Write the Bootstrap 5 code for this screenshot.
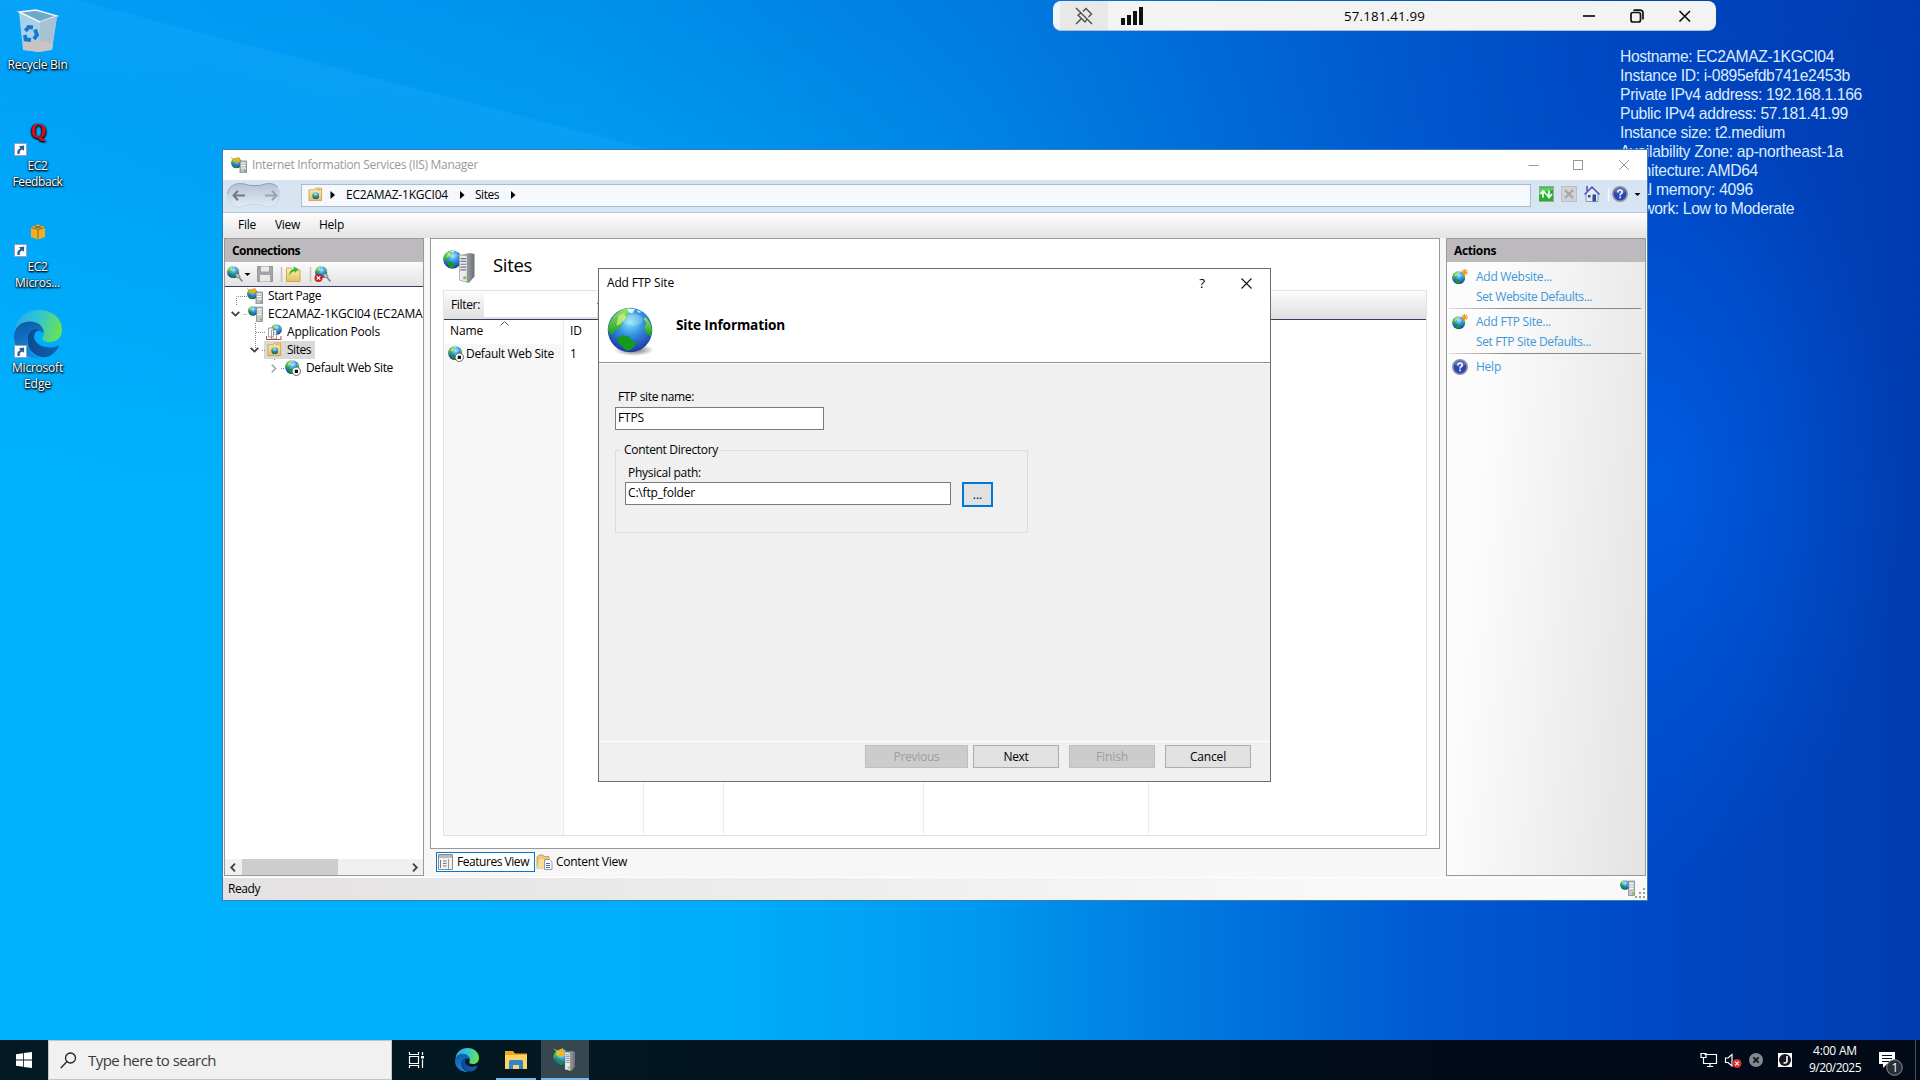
<!DOCTYPE html>
<html lang="en">
<head>
<meta charset="utf-8">
<title>IIS Manager - Add FTP Site</title>
<link href="https://cdn.jsdelivr.net/npm/bootstrap@5.3.0/dist/css/bootstrap.min.css" rel="stylesheet">
<style>
html,body{width:1920px;height:1080px;overflow:hidden;margin:0}
body{font-family:"Open Sans","Noto Sans",sans-serif;font-size:12px;line-height:18px;color:#000;background:#0078d7}
.desktop{width:1920px;height:1080px}
.wallpaper{left:0;top:0;width:1920px;height:1080px}
svg{display:block;flex:none}
.t{white-space:nowrap;display:inline-block;flex:none}
.i16{width:16px;height:16px}
/* desktop shortcuts */
.shortcuts{left:0;top:0;width:75px}
.shortcut{height:101px;color:#fff;text-shadow:0 1px 2px #000,1px 1px 2px #000,0 0 2px rgba(0,0,0,.6);line-height:15.5px}
.shortcut .pic{width:48px;height:48px;margin-top:7px;margin-bottom:2px}
/* host info */
.hostinfo{left:1620px;top:46.5px;font-family:"Liberation Sans",Arial,sans-serif;font-size:15.7px;line-height:19px;color:#dcecff}
/* remote bar */
.remotebar{left:1053px;top:1px;width:663px;height:30px;background:#f3f3f3;border-radius:8px;border-bottom:1px solid #a9bfd8;font-size:13.3px;padding-left:7px}
.pinbox{width:48px;height:29px;background:#e8e8e8}
.signal{margin-left:13px}
.remoteip{margin-left:200px}
.remotebtns{margin-left:158px}
/* main window */
.win{left:222px;top:149px;width:1426px;height:752px;border:1px solid #3a7cae;background:#f7f7f7}
.win-title{height:30px;background:#fff;color:#999;padding-left:8px}
.navstrip{height:33px;background:#d7e4f2;border-bottom:1px solid #b9c9da;padding-left:3px}
.address{width:1230px;height:23px;background:#f5f9fd;border:1px solid #adbccb;margin-left:18px;padding-left:6px;margin-top:-2px}
.menustrip{height:25px;background:linear-gradient(#fefefe,#e3e3e3);padding:0 0 2px 15px;gap:19px}
.mainarea{height:639px;padding-left:1px;gap:6px}
.pane{border:1px solid #999;background:#fff}
.conn,.acts{width:200px;height:638px}
.pane-head{height:23px;background:#bdbabd;padding-left:7px;font-weight:700}
.conn-tools{height:25px;background:linear-gradient(#fbfbfb,#e3e2e4);border-bottom:1px solid #3c3a5c}
.tree-row{height:18px;width:198px;overflow:hidden}
.picked{background:#d9d9d9;height:18px;width:51px;padding-left:3px;margin-left:5px}
.treelines{left:0;top:0}
.hscroll{height:16px;background:#f0f0f0}
.hthumb{width:96px;height:16px;background:#cdcdcd}
.center{width:1010px}
.viewpane{height:611px;padding:0 12px}
.viewhead{height:51px}
.viewname{font-size:18.5px;margin-left:17px}
.gridbox{height:546px;border:1px solid #e2e2e4}
.filterbar{height:29px;background:linear-gradient(#fcfcfc,#dfdee0);border-bottom:1px solid #3c3a5c;padding-left:7px}
.filterinput{width:113px;height:23px;background:#fff;margin-left:4px}
.gcol{border-right:1px solid #e3eefb;height:515px;width:80px}
.gcol-sorted{background:linear-gradient(#fff 24px,#f7f7f7 24px);width:120px}
.gcap{height:24px;padding:2px 0 0 6px}
.sortmark{left:56px;top:1px}
.viewtab{height:20px;border:1px solid transparent}
.viewtab-on{border-color:#0078d7;background:#fff;width:99px}
.acts{background:linear-gradient(95deg,#fcfcfc 20%,#e3e3e3)}
.acts a{color:#3d97d9;text-decoration:none}
.act-row{height:20px;padding-left:5px}
.act-row .i16{margin-right:8px}
.act-plain{padding-left:29px}
.act-sep{height:1px;margin:1px 4px 3px 2px;background:linear-gradient(90deg,#ddd,#888 30%)}
.statusbar{height:23px;border-top:1px solid #fff;background:linear-gradient(90deg,#e3e1e2,#f9f9f9 80%)}
/* dialog */
.dlg{left:598px;top:268px;width:673px;height:514px;border:1px solid #6d6d6d;background:#f0f0f0}
.dlg-title{height:30px;background:#fff;padding:0 18px 2px 8px}
.dlg-head{height:65px;background:#fff;border-bottom:1px solid #fff;box-shadow:inset 0 -1px #8f8f8f;padding-left:8px}
.dlg-caption{font-size:13.6px;margin:17px 0 0 19px}
.dlg-body{height:377px;padding:24px 16px 0}
.field{height:23px;background:#fff;border:1px solid #7a7a7a;padding:0 2px;line-height:19px}
.groupbox{width:413px;height:83px;border:1px solid #dcdcdc;margin-top:20px;padding:13px 9px 0}
.group-cap{left:5px;top:-10px;background:#f0f0f0;padding:0 3px}
.dlg-foot{height:40px;border-top:1px solid #fff;padding:3px 19px 0 0}
.wbtn{height:23px;width:86px;background:#e1e1e1;border:1px solid #adadad;margin-left:10px}
.wbtn-off{background:#ccc;border-color:#bfbfbf;color:#9d9d9d}
.browse{width:31px;height:25px;border:2px solid #0078d7;background:#e1e1e1;margin-left:11px}
/* taskbar */
.taskbar{left:0;top:1040px;width:1920px;height:40px;background:linear-gradient(90deg,#021923,#021722 30%,#020b1a 75%,#020a18);color:#fff}
.search{width:344px;height:40px;background:#f1f1f1;border:1px solid #c4c4c4;color:#3b3b3b;font-size:15px}
.tb{width:48px;height:40px}
.tb-on{background:#36474f}
.clock{line-height:17.5px;width:60px}
</style>
<script src="https://cdn.jsdelivr.net/npm/bootstrap@5.3.0/dist/js/bootstrap.bundle.min.js"></script>
</head>
<body>
<svg width="0" height="0" class="position-absolute">
<defs>
<radialGradient id="gb" cx=".5" cy=".32" r=".68"><stop offset="0" stop-color="#86e4ff"/><stop offset=".45" stop-color="#3390e0"/><stop offset="1" stop-color="#1c34a4"/></radialGradient>
<linearGradient id="gg" x2="0" y2="1"><stop offset="0" stop-color="#9be65a"/><stop offset="1" stop-color="#169c22"/></linearGradient>
<linearGradient id="gs"><stop offset="0" stop-color="#c8ccd0"/><stop offset="1" stop-color="#6b6f73"/></linearGradient>
<linearGradient id="gf" x2="0" y2="1"><stop offset="0" stop-color="#fdf0b8"/><stop offset="1" stop-color="#e5bf5c"/></linearGradient>
<linearGradient id="e1" x1="0" y1=".3" x2="1" y2=".5"><stop offset="0" stop-color="#2fa8e8"/><stop offset=".45" stop-color="#2fc4d8"/><stop offset="1" stop-color="#6be34f"/></linearGradient>
<linearGradient id="e2" x1="0" y1="0" x2=".3" y2="1"><stop offset="0" stop-color="#0c59a4"/><stop offset="1" stop-color="#1a86dd"/></linearGradient>
<linearGradient id="e3"><stop offset="0" stop-color="#0c4a94"/><stop offset="1" stop-color="#1460ae"/></linearGradient>
<symbol id="globe" viewBox="0 0 32 32">
 <circle cx="16" cy="16" r="15.5" fill="url(#gb)"/>
 <path d="M3 9Q7 2 14 1L17 3L13.500 5L14.500 8L11 10L10 13L8 16L5.500 15.500L3.500 20L1 17Q0 13 3 9Z" fill="url(#gg)"/>
 <path d="M8 6L12 4L13 8L9 12L6.500 13Z" fill="#d9efa0" opacity=".7"/>
 <path d="M7.500 21L11 19.500L15 20.500L17 23L20.500 24.500L18.500 28Q16 31 13 30L10 27L7.500 24Z" fill="#159a20"/>
 <path d="M26.500 7Q31 11 31.300 16L30.500 20L27.500 19L26 14.500L27.500 11L25.500 8.500Z" fill="url(#gg)"/>
 <path d="M14 1L19.500 1.400L17.500 4.500L15 3.500ZM20.500 2L24 3.500L22 4Z" fill="#e6f4f0"/>
 <ellipse cx="18" cy="9" rx="7" ry="4" fill="#fff" opacity=".22"/>
</symbol>
<symbol id="tower" viewBox="0 0 16 32">
 <path d="M0 2L11 0L16 1V25L10 32L0 29Z" fill="url(#gs)"/>
 <path d="M0 2L8 3V31L0 29Z" fill="#eceef0" stroke="#8d9195" stroke-width=".6"/>
 <path d="M1 6H7M1 9H7M1 12H7M1 15H7M1 18H7" stroke="#6c7480" stroke-width="1.2"/>
 <rect x="4" y="25" width="3" height="3" fill="#5fd427"/>
</symbol>
<symbol id="iis" viewBox="0 0 16 16">
 <use href="#globe" x="0" y=".5" width="11" height="11"/>
 <path d="M0 .5L3 2.500L8 0L9.500 5.500L5 5L6.500 3.500L3.500 4.500Z" fill="#f4b41c" stroke="#c98a10" stroke-width=".4"/>
 <path d="M9 4H15.500V16H9Z" fill="#b9bfc2" stroke="#6d7478" stroke-width=".7"/><path d="M10 6H14.500M10 8.500H14.500M10 11H14.500" stroke="#fff"/><path d="M13 13h2v2h-2z" fill="#6ecb2c"/>
</symbol>
<symbol id="srv" viewBox="0 0 16 16">
 <use href="#globe" x="0" y="0" width="10" height="10"/>
 <path d="M8.500 1H14.500V15.500H8.500Z" fill="#c3c8cb" stroke="#757c80" stroke-width=".7"/><path d="M9.500 3.500H13.500M9.500 6H13.500M9.500 8.500H13.500" stroke="#fff"/><path d="M12 12.500h2v2h-2z" fill="#6ecb2c"/>
</symbol>
<symbol id="folderg" viewBox="0 0 16 16">
 <path d="M1 3H7L8 1.200H14.500V14.500H1Z" fill="url(#gf)" stroke="#c39a3a" stroke-width=".8"/><path d="M9 3h4.500" stroke="#d79b2c"/><use href="#globe" x="4.500" y="5.500" width="7.500" height="7.500"/>
</symbol>
<symbol id="stopglobe" viewBox="0 0 16 16">
 <use href="#globe" width="14.500" height="14.500"/><circle cx="11.300" cy="11.300" r="4.200" fill="#fff" stroke="#555" stroke-width=".9"/><path d="M9.700 9.700h3.300v3.300h-3.300z" fill="#111"/>
</symbol>
<symbol id="star" viewBox="0 0 16 16">
 <use href="#globe" y="2" width="13.500" height="13.500"/><path d="M12.500 0V6.500M9.200 3.200H16M10.200 .9L15 5.600M15 .9L10.200 5.600" stroke="#f39a14" stroke-width="1.100"/>
</symbol>
<symbol id="help" viewBox="0 0 16 16">
 <circle cx="8" cy="8" r="7.200" fill="#2a48b4" stroke="#8f959f" stroke-width="1.600"/><ellipse cx="8" cy="5" rx="5" ry="3" fill="#fff" opacity=".22"/><path d="M5.800 6.200Q5.900 4.100 8 4.100T10.200 6.100Q10.200 7.200 9 7.900T8.100 9.600" fill="none" stroke="#fff" stroke-width="1.500"/><path d="M7.300 10.600h1.600v1.600h-1.600z" fill="#fff"/>
</symbol>
<symbol id="plug" viewBox="0 0 16 16">
 <use href="#globe" width="12.500" height="12.500"/><path d="M8 8L11 7.500L13 10L12.500 12L9.500 11.500Z" fill="#b8c0c4" stroke="#667" stroke-width=".7"/><path d="M12.500 12L15.500 15.500" stroke="#7d8a92" stroke-width="1.600"/>
</symbol>
<symbol id="edge" viewBox="0 0 48 48">
 <path d="M1 22C2 8 12 0 25 0C39 0 48 9 48 20C48 28 42 32 35.500 32C30 32 27.500 30 28.500 28C30.500 25.500 30 22 27.500 19.500C22 13 7 12 1 22Z" fill="url(#e1)"/>
 <path d="M0 25C2 14 10 11 17 11.500C24 12 29.500 16 30 23C22 17 13 22 13 32C13 39 18 45 26 48C11 48.500 -1 38 0 25Z" fill="url(#e2)"/>
 <path d="M30 23C25 17 19 19 16 22C12 27 13 35 17 41C23 48 33 49.500 40 43C43 40 45 37 45 36C45 35 44 35.500 43 36C35 40 21 36 20 27C20 24 22 20 26 20Q29 20 30 23Z" fill="url(#e3)"/>
</symbol>
<symbol id="lnk" viewBox="0 0 13 13"><path d="M.5 .5h12v12H.5z" fill="#fff" stroke="#9aa3ab"/><path d="M3.500 11Q2.500 6.500 6.500 5.200L5 3.200L10.200 2.600L10 7.800L8.400 6.600Q5.200 7.500 5.800 11Z" fill="#2a5c9e"/></symbol>
</defs>
</svg>

<main class="desktop position-relative overflow-hidden">
 <svg class="wallpaper position-absolute" viewBox="0 0 1920 1080" preserveAspectRatio="none">
  <defs>
   <linearGradient id="w1" gradientUnits="userSpaceOnUse" x1="0" y1="0" x2="1920" y2="0"><stop offset="0" stop-color="#009ff8"/><stop offset=".3" stop-color="#0092ed"/><stop offset=".52" stop-color="#007ae0"/><stop offset=".68" stop-color="#0060d3"/><stop offset=".83" stop-color="#0048c4"/><stop offset="1" stop-color="#003cb2"/></linearGradient>
   <linearGradient id="w2" gradientUnits="userSpaceOnUse" x1="0" y1="0" x2="1920" y2="0"><stop offset="0" stop-color="#00b2fc"/><stop offset=".38" stop-color="#00adfa"/><stop offset=".5" stop-color="#009bf1"/><stop offset=".62" stop-color="#0079e0"/><stop offset=".74" stop-color="#005ad2"/><stop offset=".86" stop-color="#0048c6"/><stop offset="1" stop-color="#003db0"/></linearGradient>
   <linearGradient id="wm" x2="0" y2="1"><stop offset="0" stop-color="#000"/><stop offset=".45" stop-color="#fff"/></linearGradient>
   <linearGradient id="wb" gradientUnits="userSpaceOnUse" x1="340" y1="70" x2="315" y2="165"><stop offset="0" stop-color="#28b6ff" stop-opacity=".2"/><stop offset="1" stop-color="#28b6ff" stop-opacity="0"/></linearGradient>
   <radialGradient id="wr" gradientUnits="userSpaceOnUse" cx="0" cy="0" r="1" gradientTransform="translate(1660 480) scale(240 400)"><stop offset="0" stop-color="#0064ea" stop-opacity=".7"/><stop offset="1" stop-color="#0060e6" stop-opacity="0"/></radialGradient>
   <mask id="mk"><rect width="1920" height="1080" fill="url(#wm)"/></mask>
  </defs>
  <rect width="1920" height="1080" fill="url(#w1)"/>
  <rect width="1920" height="1080" fill="url(#w2)" mask="url(#mk)"/>
  <rect x="1400" y="60" width="520" height="840" fill="url(#wr)"/>
  <path d="M75 0L660 152L660 230L0 230V0Z" fill="url(#wb)"/>
 </svg>

 <section class="shortcuts position-absolute d-flex flex-column">
  <div class="shortcut d-flex flex-column align-items-center">
   <svg class="pic" viewBox="0 0 48 48"><path d="M5 5L22 3L43 9L38 43L25 45L9 43Z" fill="#c5d9e6" opacity=".85"/><path d="M5 5L22 3L43 9L26 15Z" fill="#6fa9c9" stroke="#f2f8fb" stroke-width="1.400"/><path d="M26 15L43 9L38 42L25 45Z" fill="#a8c2d2"/><path d="M9 36L22 33L39 36L38 42L25 45L10 43Z" fill="#c9c4c2"/><g fill="none" stroke="#1677cf" stroke-width="3.800"><path d="M11.500 24L14.500 20L19 20.500"/><path d="M21 22.500L23 28L20 32"/><path d="M17 33L11.500 32.500L11 28"/></g></svg>
   <span class="t" data-w="60">Recycle Bin</span>
  </div>
  <div class="shortcut d-flex flex-column align-items-center">
   <svg class="pic" viewBox="0 0 48 48"><text x="16.500" y="30" font-family="Liberation Serif,serif" font-size="20" font-weight="700" fill="#e00a1e">Q</text><use href="#lnk" y="35" width="13" height="13"/></svg>
   <span class="t" data-w="20">EC2</span><span class="t" data-w="50">Feedback</span>
  </div>
  <div class="shortcut d-flex flex-column align-items-center">
   <svg class="pic" viewBox="0 0 48 48"><path d="M17 18L24 15.500L31 18V28L24 30.500L17 28Z" fill="#f5ae22"/><path d="M17 18.500L24 20.500L31 18.500M24 20.500V30M20.500 16.800L27 19M27.500 16.800L21 19" stroke="#5f6a3a" stroke-width=".9" fill="none"/><use href="#lnk" y="35" width="13" height="13"/></svg>
   <span class="t" data-w="20">EC2</span><span class="t" data-w="45">Micros...</span>
  </div>
  <div class="shortcut d-flex flex-column align-items-center">
   <svg class="pic" viewBox="0 0 48 48"><use href="#edge" width="48" height="48"/><use href="#lnk" y="35" width="13" height="13"/></svg>
   <span class="t" data-w="51">Microsoft</span><span class="t" data-w="27">Edge</span>
  </div>
 </section>

 <section class="hostinfo position-absolute d-flex flex-column align-items-start">
  <span class="t" data-w="214">Hostname: EC2AMAZ-1KGCI04</span>
  <span class="t" data-w="230">Instance ID: i-0895efdb741e2453b</span>
  <span class="t" data-w="242">Private IPv4 address: 192.168.1.166</span>
  <span class="t" data-w="228">Public IPv4 address: 57.181.41.99</span>
  <span class="t" data-w="165">Instance size: t2.medium</span>
  <span class="t" data-w="223">Availability Zone: ap-northeast-1a</span>
  <span class="t" data-w="138">Architecture: AMD64</span>
  <span class="t" data-w="133">Total memory: 4096</span>
  <span class="t" data-w="174">Network: Low to Moderate</span>
 </section>

 <header class="remotebar position-absolute d-flex align-items-center">
  <div class="pinbox d-flex align-items-center justify-content-center"><svg width="18" height="18" viewBox="0 0 18 18" fill="none" stroke="#4a4a4a" stroke-width="1.300"><path d="M1 1L17 17M6 6L3 8L10 15L12 12M8 4.500L11 1.500L16.500 7L13.500 10M6.500 11.500L1 17"/></svg></div>
  <svg class="signal" width="23" height="18" viewBox="0 0 23 18" fill="#111"><path d="M0 11h4v7H0zM6 8h4v10H6zM12 4h4v14h-4zM18 0h4v18h-4z"/></svg>
  <span class="t remoteip" data-w="81">57.181.41.99</span>
  <svg class="remotebtns" width="110" height="16" viewBox="0 0 110 16" fill="none" stroke="#111" stroke-width="1.700"><path d="M0 8H12"/><rect x="48" y="4.500" width="9.500" height="9.500" rx="2"/><path d="M50.500 2.200H57Q60 2.200 60 5V11.500"/><path d="M96.500 3L107 13.500M107 3L96.500 13.500"/></svg>
 </header>

 <section class="win position-absolute d-flex flex-column">
  <div class="win-title d-flex align-items-center">
   <svg class="i16"><use href="#iis" width="16" height="16"/></svg>
   <span class="t me-auto" style="margin-left:5px" data-w="226">Internet Information Services (IIS) Manager</span>
   <svg width="120" height="12" viewBox="0 0 120 12" fill="none" stroke="#999"><path d="M1.500 6.500H11.500"/><rect x="46.500" y="1.500" width="9" height="9"/><path d="M92 1L102 11M102 1L92 11"/></svg>
  </div>
  <nav class="navstrip d-flex align-items-center">
   <svg width="57" height="28" viewBox="0 0 57 28"><defs><linearGradient id="nb" x2="0" y2="1"><stop offset="0" stop-color="#b4c2d2"/><stop offset=".5" stop-color="#cbd8e6"/><stop offset="1" stop-color="#e2ecf6"/></linearGradient></defs><path d="M13 1.500Q19 1.500 24 3.500H34Q39 1.500 44 1.500Q54 3 54 13Q53 24 43 25Q38 24 34 22.500H23Q18 25 12 25Q2 23 1.500 13Q2 3 13 1.500Z" fill="url(#nb)" stroke="#cbd8e6"/><path d="M1.500 12Q3 2.500 13 1.500Q19 1.500 24 3.500H34Q39 1.500 44 1.500Q49 2 52 5" fill="none" stroke="#8f9fb2"/><path d="M19 13.500H7.500M12 8.800L7.500 13.500L12 18.200" stroke="#75797f" stroke-width="2" fill="none"/><path d="M39 13.500H50.500M46 8.800L50.500 13.500L46 18.200" stroke="#9ca5ae" stroke-width="2" fill="none"/></svg>
   <div class="address d-flex align-items-center">
    <svg class="i16"><use href="#folderg" width="15" height="15"/></svg>
    <svg width="22" height="8" viewBox="0 0 22 8"><path d="M6.500 0v8l4.500-4z"/></svg>
    <span class="t" data-w="102">EC2AMAZ-1KGCI04</span>
    <svg width="27" height="8" viewBox="0 0 27 8"><path d="M12 0v8l4.500-4z"/></svg>
    <span class="t" data-w="24">Sites</span>
    <svg width="20" height="8" viewBox="0 0 20 8"><path d="M12 0v8l4.500-4z"/></svg>
   </div>
   <svg width="107" height="20" viewBox="0 0 107 20" class="ms-2 mb-1">
    <rect x="-.5" y="2.500" width="15" height="15" fill="#22b22e" stroke="#9aa89e"/><path d="M1 11Q5 7 14 6V3.500H0V11Z" fill="#8be88a" opacity=".55"/><path d="M4 13.500V8Q4 7 5.500 7M1.500 10L4 7L7 10M10 6.500V12M7.500 10L10 13.500L13 10" stroke="#fff" stroke-width="1.700" fill="none"/>
    <rect x="22.500" y="2.500" width="15" height="15" fill="#d0d2d5" stroke="#bbbec2"/><path d="M26 6L34 14M34 6L26 14" stroke="#a2a5aa" stroke-width="2"/>
    <path d="M47 9V17.500H59V9L53 3.500Z" fill="#e4e9f2" stroke="#7683a8" stroke-width=".8"/><path d="M45.500 10.500L53 3L60.500 10.500M48 2V7" stroke="#4a50c0" stroke-width="1.500" fill="none"/><path d="M53.500 10.500h3.500v7h-3.500z" fill="#274f94"/><path d="M49 11h2.500v2.500H49z" fill="#39507c"/>
    <path d="M69.500 4V17" stroke="#f7f9fc" stroke-width="1.500"/><use href="#help" x="73" y="2" width="16" height="16"/><path d="M95.500 9h6l-3 3z"/>
   </svg>
  </nav>
  <div class="menustrip d-flex align-items-center"><span class="t" data-w="18">File</span><span class="t" data-w="25">View</span><span class="t" data-w="25">Help</span></div>

  <div class="mainarea d-flex">
   <aside class="pane conn d-flex flex-column">
    <div class="pane-head d-flex align-items-center"><span class="t" data-w="68">Connections</span></div>
    <div class="conn-tools">
     <svg width="120" height="24" viewBox="0 0 120 24"><use href="#plug" x="2" y="4" width="16" height="16"/><path d="M19.500 11h6l-3 3z"/><path d="M32.500 4.500h15v15h-15z" fill="#a3a5a8" stroke="#97999c"/><path d="M36 4.500h8v5h-8zM35 13h10v6.500H35z" fill="#e9e9ea"/><path d="M56.500 5V20M85.500 5V20" stroke="#c7c3ae" stroke-width="1.500"/><path d="M61.500 6H66L68 8H75V19.500H61.500Z" fill="url(#gf)" stroke="#c39a3a" stroke-width=".8"/><path d="M64 14Q64 8 69 7L68 4.500L73.500 7L70 11L69.500 9Q66 10 64 14Z" fill="#3fb52c"/><use href="#plug" x="90" y="4" width="16" height="16"/><circle cx="93.500" cy="16" r="4" fill="#cf2222"/><path d="M91.800 14.300L95.200 17.700M95.200 14.300L91.800 17.700" stroke="#fff" stroke-width="1.200"/></svg>
    </div>
    <div class="flex-grow-1 position-relative">
     <svg class="position-absolute treelines" width="60" height="92" viewBox="0 0 60 92" fill="none" stroke="#888" stroke-dasharray="1 1"><path d="M11.500 18V9.500H22M18.500 27.500H22M30.500 36V63M31 45.500H41M37 63.500H40M49.500 72V74M56 81.500H60"/></svg>
     <div class="tree-row d-flex align-items-center" style="padding-left:22px"><svg class="i16"><use href="#iis" width="16" height="16"/></svg><span class="t" style="margin-left:5px" data-w="53">Start Page</span></div>
     <div class="tree-row d-flex align-items-center" style="padding-left:6px"><svg width="9" height="6" fill="none" stroke="#404040" stroke-width="1.800"><path d="M.7 .8L4.500 4.600L8.300 .8"/></svg><svg class="i16" style="margin-left:8px"><use href="#srv" width="16" height="16"/></svg><span class="t" style="margin-left:4px" data-w="154.500">EC2AMAZ-1KGCI04 (EC2AMA</span></div>
     <div class="tree-row d-flex align-items-center" style="padding-left:41px"><svg class="i16" viewBox="0 0 16 16"><use href="#globe" x="5" y="0" width="11" height="11"/><path d="M2.500 4h5v9h-5zM5.500 6h5v9h-5z" fill="#fff" stroke="#778" stroke-width=".7"/><path d="M7 8.500h2.500M7 10.500h2.500" stroke="#889" stroke-width=".7"/><path d="M.5 12v3.500H15V12" fill="none" stroke="#c2403a"/></svg><span class="t" style="margin-left:5px" data-w="93">Application Pools</span></div>
     <div class="tree-row d-flex align-items-center" style="padding-left:25px"><svg width="9" height="6" fill="none" stroke="#404040" stroke-width="1.800"><path d="M.7 .8L4.500 4.600L8.300 .8"/></svg><div class="picked d-flex align-items-center"><svg class="i16"><use href="#folderg" width="15" height="15"/></svg><span class="t" style="margin-left:4px" data-w="24">Sites</span></div></div>
     <div class="tree-row d-flex align-items-center" style="padding-left:46px"><svg width="6" height="9" fill="none" stroke="#a0a0a0" stroke-width="1.500"><path d="M.8 .7L4.600 4.500L.8 8.300"/></svg><svg class="i16" style="margin-left:8px"><use href="#stopglobe" width="16" height="16"/></svg><span class="t" style="margin-left:5px" data-w="87">Default Web Site</span></div>
    </div>
    <div class="hscroll d-flex align-items-center"><svg width="17" height="9" viewBox="0 0 17 9" fill="none" stroke="#404040" stroke-width="1.800"><path d="M10 .7L6.200 4.500L10 8.300"/></svg><div class="hthumb me-auto"></div><svg width="14" height="9" viewBox="0 0 14 9" fill="none" stroke="#404040" stroke-width="1.800"><path d="M4 .7L7.800 4.500L4 8.300"/></svg></div>
   </aside>

   <section class="center d-flex flex-column">
    <div class="pane viewpane">
     <div class="viewhead d-flex align-items-center">
      <svg class="mt-1" width="33" height="34" viewBox="0 0 33 34"><use href="#globe" width="19" height="19"/><use href="#tower" x="15.500" y="3" width="17" height="30"/></svg>
      <span class="t viewname" data-w="39">Sites</span>
     </div>
     <div class="gridbox">
      <div class="filterbar d-flex align-items-center"><span class="t" data-w="29">Filter:</span><div class="filterinput"></div><svg width="6" height="4"><path d="M0 0h6l-3 3z"/></svg></div>
      <div class="d-flex">
       <div class="gcol gcol-sorted position-relative">
        <svg class="position-absolute sortmark" width="9" height="5" fill="none" stroke="#555"><path d="M.5 4.500L4.500 .5L8.500 4.500"/></svg>
        <div class="gcap"><span class="t" data-w="33">Name</span></div>
        <div class="d-flex align-items-center" style="height:20px;padding-left:4px"><svg class="i16"><use href="#stopglobe" width="16" height="16"/></svg><span class="t" style="margin-left:2px" data-w="88">Default Web Site</span></div>
       </div>
       <div class="gcol"><div class="gcap"><span class="t" data-w="12">ID</span></div><div style="height:20px;padding:1px 0 0 6px"><span class="t">1</span></div></div>
       <div class="gcol"></div><div class="gcol" style="width:200px"></div><div class="gcol" style="width:225px"></div>
      </div>
     </div>
    </div>
    <div class="d-flex" style="padding:3px 0 0 6px">
     <div class="viewtab viewtab-on d-flex align-items-center"><svg width="17" height="16" viewBox="0 0 17 16"><path d="M1.500 .5h14v15h-14z" fill="#f2f2f2" stroke="#8a8a8a"/><path d="M2 1h13v3H2z" fill="#b7bac0"/><path d="M3.500 6v8M6 7h3.500M6 9.500h3.500M6 12h3.500" stroke="#777"/><path d="M11.500 5v10" stroke="#9a9a9a"/></svg><span class="t" style="margin-left:3px" data-w="72">Features View</span></div>
     <div class="viewtab d-flex align-items-center"><svg width="17" height="16" viewBox="0 0 17 16"><path d="M1 3L3 1H7L8 2.500H13V14H1Z" fill="#ecc978" stroke="#c39a3a" stroke-width=".8"/><path d="M1 14L4 5H14L12 14Z" fill="#f8dd97"/><path d="M8.500 5.500h5l2.500 2.500v7.500H8.500z" fill="#fff" stroke="#8c8c94" stroke-width=".9"/><path d="M10 9.500h4M10 11.500h4M10 13.500h4" stroke="#3f6ec6"/></svg><span class="t" style="margin-left:3px" data-w="71">Content View</span></div>
    </div>
   </section>

   <aside class="pane acts">
    <div class="pane-head d-flex align-items-center"><span class="t" data-w="42">Actions</span></div>
    <div class="act-row d-flex align-items-center" style="margin-top:5px"><svg class="i16"><use href="#star" width="16" height="16"/></svg><a class="t" href="#" data-w="76">Add Website...</a></div>
    <div class="act-row act-plain d-flex align-items-center"><a class="t" href="#" data-w="116">Set Website Defaults...</a></div>
    <div class="act-sep"></div>
    <div class="act-row d-flex align-items-center"><svg class="i16"><use href="#star" width="16" height="16"/></svg><a class="t" href="#" data-w="75">Add FTP Site...</a></div>
    <div class="act-row act-plain d-flex align-items-center"><a class="t" href="#" data-w="115">Set FTP Site Defaults...</a></div>
    <div class="act-sep"></div>
    <div class="act-row d-flex align-items-center"><svg class="i16"><use href="#help" width="16" height="16"/></svg><a class="t" href="#" data-w="25">Help</a></div>
   </aside>
  </div>
  <footer class="statusbar d-flex align-items-center"><span class="t me-auto" style="margin-left:5px" data-w="32">Ready</span>
   <svg width="27" height="18" viewBox="0 0 27 18"><use href="#srv" y="0" width="16" height="16"/><path d="M23 8h2v2h-2zM19 12h2v2h-2zM23 12h2v2h-2zM15 16h2v2h-2zM19 16h2v2h-2zM23 16h2v2h-2z" fill="#999"/></svg></footer>
 </section>

 <section class="dlg position-absolute d-flex flex-column" role="dialog">
  <div class="dlg-title d-flex align-items-center"><span class="t me-auto" data-w="67">Add FTP Site</span><span class="t" style="font-size:13.500px">?</span><svg width="11" height="11" style="margin-left:36px" stroke="#111" stroke-width="1.100"><path d="M.5 .5L10.500 10.500M10.500 .5L.5 10.500"/></svg></div>
  <div class="dlg-head d-flex align-items-start">
   <svg width="50" height="52" viewBox="0 0 50 52" style="margin-top:7px"><defs><radialGradient id="sh"><stop offset="0" stop-opacity=".6"/><stop offset="1" stop-opacity="0"/></radialGradient></defs><ellipse cx="27" cy="44" rx="20" ry="6" fill="url(#sh)"/><use href="#globe" y="1" width="46" height="46"/></svg>
   <span class="t fw-bold dlg-caption" data-w="109">Site Information</span>
  </div>
  <div class="dlg-body">
   <div style="padding-left:3px"><label class="t" data-w="76">FTP site name:</label></div>
   <div class="field" style="width:209px;margin-top:1px"><span class="t" data-w="26">FTPS</span></div>
   <div class="groupbox position-relative">
    <span class="group-cap position-absolute"><span class="t" data-w="94">Content Directory</span></span>
    <div style="padding-left:3px"><label class="t" data-w="73">Physical path:</label></div>
    <div class="d-flex align-items-start"><div class="field" style="width:326px"><span class="t" data-w="67">C:\ftp_folder</span></div><div class="browse d-flex align-items-center justify-content-center"><span class="t">...</span></div></div>
   </div>
  </div>
  <div class="dlg-foot d-flex justify-content-end">
   <div class="wbtn wbtn-off d-flex align-items-center justify-content-center" style="width:103px"><span class="t" data-w="46">Previous</span></div>
   <div class="wbtn d-flex align-items-center justify-content-center" style="margin-left:5px"><span class="t" data-w="25">Next</span></div>
   <div class="wbtn wbtn-off d-flex align-items-center justify-content-center"><span class="t" data-w="32">Finish</span></div>
   <div class="wbtn d-flex align-items-center justify-content-center"><span class="t" data-w="36">Cancel</span></div>
  </div>
 </section>

 <footer class="taskbar position-absolute d-flex align-items-center">
  <div class="tb d-flex align-items-center justify-content-center"><svg width="16" height="16" fill="#fff"><path d="M0 2.200L7 1.200V7.600H0zM7.800 1.100L16 0V7.600H7.800zM0 8.400H7V14.800L0 13.800zM7.800 8.400H16V16L7.800 14.900z"/></svg></div>
  <div class="search d-flex align-items-center"><svg width="17" height="17" style="margin-left:11px" viewBox="0 0 17 17" fill="none" stroke="#222" stroke-width="1.300"><circle cx="10.500" cy="6" r="5"/><path d="M7 9.500L.8 16"/></svg><span class="t" style="margin-left:11px" data-w="128">Type here to search</span></div>
  <div class="tb d-flex align-items-center justify-content-center"><svg width="17" height="16" viewBox="0 0 17 16" fill="none" stroke="#fff" stroke-width="1.200"><path d="M1.500 4.500h9v7h-9zM1.500 0V2.500H10.500V0M1.500 16V13.500H10.500V16M14.500 0V3M14.500 7.500V16"/><path d="M13 4h3v2.500h-3z" fill="#fff" stroke="none"/></svg></div>
  <div class="tb d-flex align-items-center justify-content-center" style="margin-left:3px"><svg width="24" height="24"><use href="#edge" width="24" height="24"/></svg></div>
  <div class="tb d-flex flex-column align-items-center" style="padding-top:11px;margin-left:1px"><svg width="22" height="27" viewBox="0 0 22 27"><path d="M0 0H8L10 2.500H22V17H0Z" fill="#f0a81e"/><path d="M0 4H22V18H0Z" fill="#ffd562"/><path d="M4 18V10.500Q4 9 5.500 9H16.500Q18 9 18 10.500V18H14V14H8V18Z" fill="#2f83d0"/></svg><svg width="40" height="2"><path d="M0 0h40v2H0z" fill="#76b9ed"/></svg></div>
  <div class="tb tb-on d-flex flex-column justify-content-between align-items-center" style="padding-top:7px;margin-left:1px"><svg width="24" height="25" viewBox="0 0 24 25"><use href="#globe" y="2" width="17" height="17"/><path d="M0 1L5 4L10 1L12 9L5 10L6 7Z" fill="#f2b71e"/><use href="#tower" x="11" y="4" width="12" height="20"/></svg><svg width="48" height="2"><path d="M0 0h48v2H0z" fill="#76b9ed"/></svg></div>
  <div class="ms-auto d-flex align-items-center">
   <svg width="94" height="18" viewBox="0 0 94 18" fill="none"><path d="M6.500 3.500H18.500V12.500H5.500V8M9 15.500H15M12 12.500V15.500M3 2.500h5v4H3zM5.500 6.500V9" stroke="#fff" stroke-width="1.200"/><path d="M27.500 7H30L34 3.500V15L30 11.500H27.500Z" stroke="#fff" stroke-width="1.200"/><circle cx="39" cy="12.500" r="4.500" fill="#e02b2b"/><path d="M37.200 10.700L40.800 14.300M40.800 10.700L37.200 14.300" stroke="#fff" stroke-width="1.200"/><circle cx="58" cy="9" r="7" fill="#85898f"/><path d="M55.300 6.300L60.700 11.700M60.700 6.300L55.300 11.700" stroke="#10151c" stroke-width="1.800"/><path d="M80 2h14v14H80z" fill="#fff"/><circle cx="87" cy="9" r="6" fill="#15191f"/><path d="M89 5V10.500Q88.500 12.500 85.500 11.800" stroke="#fff" stroke-width="1.600"/></svg>
   <div class="clock d-flex flex-column align-items-center" style="margin:0 0 2px 13px"><span class="t" data-w="44">4:00 AM</span><span class="t" data-w="52">9/20/2025</span></div>
   <svg width="55" height="40" viewBox="0 0 55 40"><path d="M14 12h16v12h-8l-4 4v-4h-4z" fill="#fff"/><path d="M17 15.500h10M17 18.500h10M17 21.500h7" stroke="#041020"/><circle cx="29.500" cy="27.500" r="7.800" fill="#2a2e35" stroke="#8d9299"/><text x="26.500" y="32" font-size="12" fill="#fff" font-family="Open Sans,sans-serif">1</text><path d="M50.500 0V40" stroke="#46505c"/></svg>
  </div>
 </footer>
</main>
<script>
// Track each label to its nominal width so rows keep the same measure as the system font.
document.querySelectorAll('[data-w]').forEach(function (el) {
  var w = parseFloat(el.dataset.w);
  var cur = el.getBoundingClientRect().width;
  el.style.letterSpacing = ((w - cur) / el.textContent.length).toFixed(3) + 'px';
});
</script>
</body>
</html>
